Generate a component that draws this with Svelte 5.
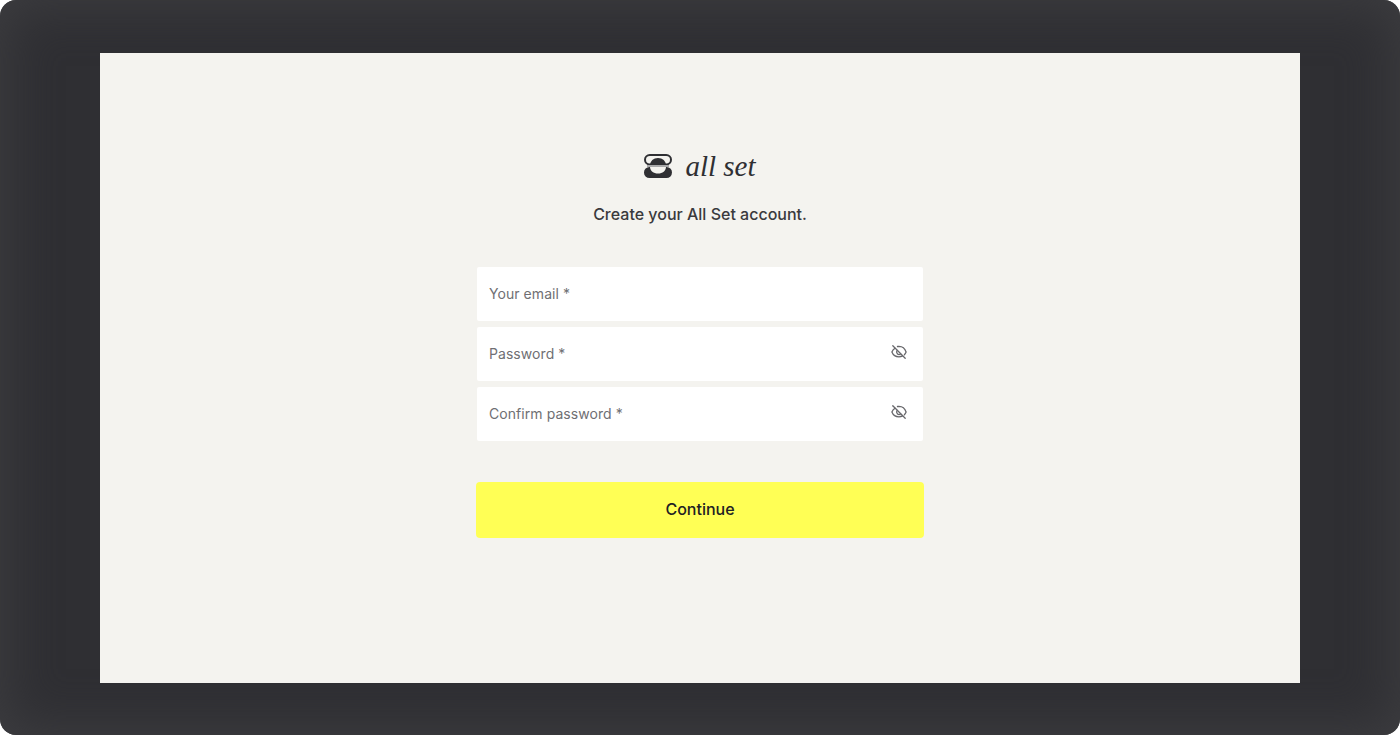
<script lang="ts">
  const fields = [
    { label: "Your email *", secret: false },
    { label: "Password *", secret: true },
    { label: "Confirm password *", secret: true },
  ];
</script>

<div class="frame">
  <main class="card">
    <div class="brand">
      <svg class="mark" width="28" height="24" viewBox="0 0 28 24" aria-hidden="true">
        <rect x="1" y="1" width="26" height="9.500" rx="4.750" fill="none" stroke="#2f2f33" stroke-width="2" />
        <path d="M6 11.500C6 7 9.500 4 14 4s8 3 8 7.500z" fill="#2f2f33" />
        <rect x="3" y="11" width="22" height="2" fill="#a9a9aa" />
        <rect x="0" y="13" width="28" height="11" rx="5.500" fill="#2f2f33" />
        <path d="M6 13c0 3.800 3.500 6.500 8 6.500s8-2.700 8-6.500z" fill="#f4f3ef" />
      </svg>
      <span class="name">all set</span>
    </div>
    <p class="lead">Create your All Set account.</p>

    <form class="fields">
      {#each fields as field}
        <div class="field">
          <span class="label">{field.label}</span>
          {#if field.secret}
            <svg class="eye" width="18" height="18" viewBox="0 0 18 18" fill="none" stroke="#68686c" stroke-width="1.300" stroke-linecap="round" stroke-linejoin="round" aria-hidden="true">
              <path d="M2.800 2.800l12.400 12.400" />
              <path d="M5 5.300C3.600 6.200 2.500 7.500 1.900 9c1.200 3 3.900 4.800 7.100 4.800 1.300 0 2.500-.3 3.600-.9" />
              <path d="M7.500 3.500A8 8 0 0 1 9 3.300c3.200 0 5.900 2 7.100 5.700-.4 1-1 1.900-1.700 2.700" />
              <path d="M7.200 7.400A2.500 2.500 0 0 0 10.600 11" />
            </svg>
          {/if}
        </div>
      {/each}
      <button class="submit" type="button">Continue</button>
    </form>
  </main>
</div>

<style>
  :global(body) {
    background: #fff;
  }

  .frame {
    box-sizing: border-box;
    height: 735px;
    padding: 53px 100px 52px;
    background: #2f2f33;
    border-radius: 16px;
    box-shadow: inset 0 0 50px 6px #3d3d40;
    font-family: Inter, "Liberation Sans", sans-serif;
  }

  .card {
    height: 630px;
    box-sizing: border-box;
    padding-top: 93px;
    display: flex;
    flex-direction: column;
    align-items: center;
    background: #f4f3ef;
  }

  .brand {
    display: flex;
    align-items: center;
    gap: 13px;
    height: 40px;
  }

  .mark {
    display: block;
  }

  .name {
    font-family: "Liberation Serif", serif;
    font-style: italic;
    font-size: 29px;
    color: #2f2f33;
  }

  .lead {
    margin: 18px 0 0;
    font-size: 16px;
    line-height: 20px;
    font-weight: 500;
    color: #3a3a3d;
  }

  .fields {
    width: 448px;
    margin-top: 43px;
    display: flex;
    flex-direction: column;
    align-items: center;
    gap: 6px;
  }

  .field {
    box-sizing: border-box;
    width: 446px;
    height: 54px;
    padding: 0 15px 0 12px;
    display: flex;
    align-items: center;
    justify-content: space-between;
    background: #fff;
    border-radius: 2px;
  }

  .label {
    margin-bottom: 2px;
    font-size: 14px;
    letter-spacing: 0.06px;
    color: #6f6f73;
  }

  .eye {
    margin-top: -4px;
  }

  .submit {
    width: 448px;
    height: 56px;
    margin-top: 35px;
    padding: 0 0 2px;
    border: 0;
    border-radius: 4px;
    background: #ffff55;
    color: #212124;
    font-family: inherit;
    font-size: 16px;
    font-weight: 500;
  }
</style>
